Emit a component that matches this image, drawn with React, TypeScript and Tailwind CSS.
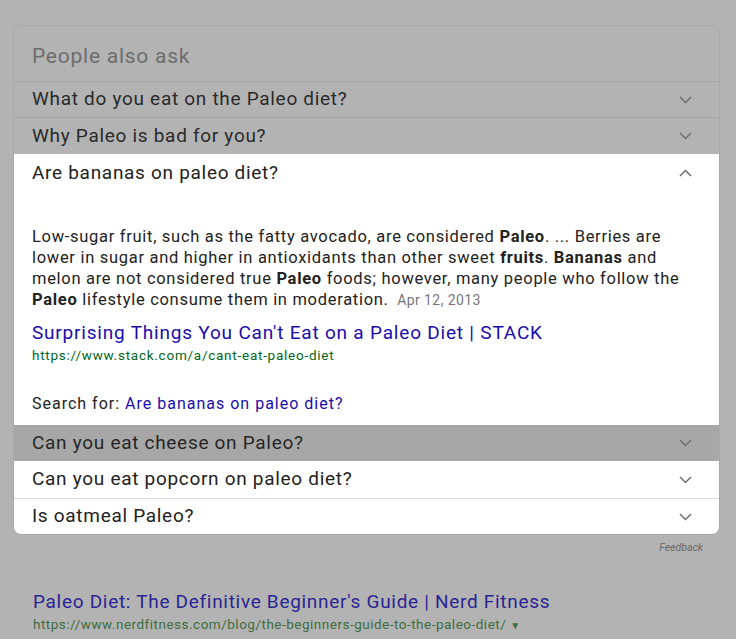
function Chevron({ up = false }: { up?: boolean }) {
  return (
    <svg width="13" height="8" viewBox="0 0 13 8" className="shrink-0">
      <polyline
        points={up ? "1,7 6.5,1.5 12,7" : "1,1 6.5,6.5 12,1"}
        fill="none"
        stroke="#6e6e6e"
        strokeWidth="1.5"
      />
    </svg>
  );
}

function Row({ q, className, up }: { q: string; className: string; up?: boolean }) {
  return (
    <div className={"flex items-center justify-between pl-[18px] pr-[27px] text-[19px] tracking-[0.7px] " + className}>
      <span>{q}</span>
      <Chevron up={up} />
    </div>
  );
}

export default function App() {
  return (
    <div className="h-[639px] overflow-hidden bg-[#b3b3b3] font-['Roboto',sans-serif]">
      <div className="pt-[25px] pl-[13px] pr-[16px]">
        <div className="rounded-lg border border-[#a9a9a9] overflow-hidden">
          <div className="h-[55px] flex items-center pl-[18px] pt-[7px] text-[21px] tracking-[0.75px] text-[#6d6d6d]">
            People also ask
          </div>
          <Row q="What do you eat on the Paleo diet?" className="h-[36px] border-t border-[#a6a6a6] text-[#2a2a2a]" />
          <Row q="Why Paleo is bad for you?" className="h-[37px] border-t border-[#a6a6a6] text-[#2a2a2a]" />
          <div className="bg-white">
            <Row q="Are bananas on paleo diet?" up className="h-[38px] text-[#222]" />
            <div className="pl-[18px] pr-[20px] pt-[34px] pb-[11px]">
              <p className="text-[16.5px] leading-[21px] tracking-[0.7px] text-[#222] whitespace-nowrap">
                Low-sugar fruit, such as the fatty avocado, are considered <b>Paleo</b>. ... Berries are
                <br />
                lower in sugar and higher in antioxidants than other sweet <b>fruits</b>. <b>Bananas</b> and
                <br />
                melon are not considered true <b>Paleo</b> foods; however, many people who follow the
                <br />
                <b>Paleo</b> lifestyle consume them in moderation.{" "}
                <span className="text-[14px] tracking-[0.4px] text-[#777]">&nbsp;Apr 12, 2013</span>
              </p>
              <div className="mt-[11px] text-[19px] leading-[22px] tracking-[0.8px] text-[#1a0dab]">
                Surprising Things You Can't Eat on a Paleo Diet | STACK
              </div>
              <div className="mt-[3px] text-[13.5px] leading-[17px] tracking-[0.75px] text-[#006621]">
                https://www.stack.com/a/cant-eat-paleo-diet
              </div>
              <div className="mt-[30px] text-[16px] leading-[20px] tracking-[1px] text-[#222]">
                Search for: <span className="text-[#1a0dab]">Are bananas on paleo diet?</span>
              </div>
            </div>
          </div>
          <Row q="Can you eat cheese on Paleo?" className="h-[36px] bg-[#a7a7a7] text-[#262626]" />
          <Row q="Can you eat popcorn on paleo diet?" className="h-[37px] bg-white text-[#222]" />
          <Row q="Is oatmeal Paleo?" className="h-[36px] bg-white border-t border-[#dcdcdc] text-[#222]" />
        </div>
        <div className="mt-[5px] pr-[17px] text-right text-[10.5px] italic text-[#6a6a6a]">Feedback</div>
        <div className="mt-[34px] pl-[20px]">
          <div className="text-[19px] leading-[24px] tracking-[0.7px] text-[#2b2493]">
            Paleo Diet: The Definitive Beginner's Guide | Nerd Fitness
          </div>
          <div className="mt-[1px] text-[13.5px] leading-[18px] tracking-[0.5px] text-[#3e6c42]">
            https://www.nerdfitness.com/blog/the-beginners-guide-to-the-paleo-diet/ <span className="text-[10px]">▼</span>
          </div>
          <div className="mt-[2px] text-[14px] leading-[20px] text-[#a0a0a0] whitespace-nowrap">
            Nov 8, 2018 - Will you lose weight eating like a caveman? A comprehensive look at the paleo diet
          </div>
        </div>
      </div>
    </div>
  );
}
